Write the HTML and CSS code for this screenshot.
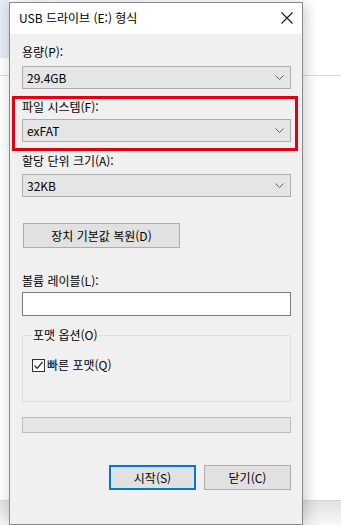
FILE: index.html
```html
<!DOCTYPE html>
<html lang="ko">
<head>
<meta charset="utf-8">
<title>USB 드라이브 (E:) 형식</title>
<link rel="stylesheet" href="styles.css">
</head>
<body>
<div class="dialog">
  <div class="titlebar">
    <span class="title">USB 드라이브 (E:) 형식</span>
    <svg class="close" width="12" height="12" viewBox="0 0 12 12"><path d="M0.5 0.5 L11.5 11.5 M11.5 0.5 L0.5 11.5" stroke="#1a1a1a" stroke-width="1.1" fill="none"/></svg>
  </div>
  <div class="content">
    <div class="label l1">용량(P):</div>
    <div class="combo c1"><span>29.4GB</span><svg class="chev" width="9" height="5" viewBox="0 0 9 5"><path d="M0.5 0.5 L4.5 4.5 L8.5 0.5" stroke="#606060" fill="none"/></svg></div>
    <div class="highlight">
      <div class="label">파일 시스템(F):</div>
      <div class="combo c2"><span>exFAT</span><svg class="chev" width="9" height="5" viewBox="0 0 9 5"><path d="M0.5 0.5 L4.5 4.5 L8.5 0.5" stroke="#606060" fill="none"/></svg></div>
    </div>
    <div class="label l3">할당 단위 크기(A):</div>
    <div class="combo c3"><span>32KB</span><svg class="chev" width="9" height="5" viewBox="0 0 9 5"><path d="M0.5 0.5 L4.5 4.5 L8.5 0.5" stroke="#606060" fill="none"/></svg></div>
    <div class="btn restore">장치 기본값 복원(D)</div>
    <div class="label l4">볼륨 레이블(L):</div>
    <div class="input"></div>
    <div class="group">
      <span class="legend">포맷 옵션(O)</span>
      <div class="check-row">
        <span class="checkbox"><svg width="11" height="11" viewBox="0 0 11 11"><path d="M1.5 5.5 L4.2 8.3 L9.5 2" stroke="#222" stroke-width="1.2" fill="none"/></svg></span>
        <span>빠른 포맷(Q)</span>
      </div>
    </div>
    <div class="progress"></div>
    <div class="actions">
      <div class="btn primary">시작(S)</div>
      <div class="btn">닫기(C)</div>
    </div>
  </div>
</div>
</body>
</html>
```
FILE: styles.css
```css
html, body {
  margin: 0;
  padding: 0;
}
body {
  width: 341px;
  height: 525px;
  overflow: hidden;
  box-sizing: border-box;
  padding: 2px 0 0 9px;
  font-family: "Noto Sans CJK KR", "Noto Sans", sans-serif;
  font-size: 12px;
  color: #000;
  background:
    linear-gradient(#e4ebf4, #e4ebf4) 0 0 / 9px 58px no-repeat,
    linear-gradient(#dadada, #dadada) 0 75px / 100% 1px no-repeat,
    linear-gradient(#d4d4d4, #d4d4d4) 0 500px / 100% 1px no-repeat,
    linear-gradient(#e2e2e2, #f7f7f7) 0 501px / 100% 24px no-repeat,
    #ffffff;
}
.dialog {
  width: 294px;
  height: 523px;
  box-sizing: border-box;
  border: 1px solid #8a8a8a;
  background: #f0f0f0;
  box-shadow: 2px 2px 14px rgba(0, 0, 0, 0.22);
  display: flex;
  flex-direction: column;
}
.titlebar {
  height: 31px;
  background: #ffffff;
  display: flex;
  align-items: center;
  justify-content: space-between;
  padding: 0 9px 0 9px;
  flex: none;
}
.title {
  font-size: 12px;
  line-height: 16px;
  color: #000;
  margin-top: -1px;
}
.close {
  margin-top: -1px;
}
.content {
  padding: 0 11px 0 12px;
  display: flex;
  flex-direction: column;
}
.label {
  height: 16px;
  line-height: 16px;
  white-space: nowrap;
}
.l1 { margin-top: 10px; }
.combo {
  height: 23px;
  box-sizing: border-box;
  border: 1px solid #adadad;
  background: #e5e5e5;
  display: flex;
  align-items: center;
  justify-content: space-between;
  padding: 0 5px 0 4px;
  line-height: 16px;
}
.c1 { margin-top: 6px; }
.chev { margin-right: 1px; }
.highlight {
  margin: 7px -7px 0 -10px;
  border: 3px solid #e3000f;
  padding: 0 4px 6px 7px;
  display: flex;
  flex-direction: column;
}
.c2 { margin-top: 4px; }
.l3 { margin-top: 2px; }
.c3 { margin-top: 5px; }
.btn {
  height: 25px;
  box-sizing: border-box;
  border: 1px solid #adadad;
  background: #e1e1e1;
  display: flex;
  align-items: center;
  justify-content: center;
  line-height: 16px;
}
.restore {
  margin-top: 26px;
  margin-left: 1px;
  width: 157px;
}
.l4 { margin-top: 25px; }
.input {
  margin-top: 3px;
  height: 24px;
  box-sizing: border-box;
  border: 1px solid #7a7a7a;
  background: #ffffff;
}
.group {
  position: relative;
  margin-top: 19px;
  height: 67px;
  box-sizing: border-box;
  border: 1px solid #dcdcdc;
  border-radius: 2px;
  padding: 21px 0 0 9px;
}
.legend {
  position: absolute;
  top: -9px;
  left: 9px;
  padding: 0 1px;
  background: #f0f0f0;
  line-height: 16px;
}
.check-row {
  display: flex;
  align-items: center;
  gap: 2px;
  line-height: 16px;
}
.checkbox {
  width: 13px;
  height: 13px;
  box-sizing: border-box;
  border: 1px solid #333;
  background: #fff;
  display: flex;
  align-items: center;
  justify-content: center;
}
.progress {
  margin-top: 15px;
  height: 16px;
  box-sizing: border-box;
  border: 1px solid #bcbcbc;
  background: #e6e6e6;
}
.actions {
  margin-top: 32px;
  display: flex;
  justify-content: flex-end;
  gap: 8px;
}
.actions .btn {
  width: 87px;
}
.btn.primary {
  border: 2px solid #0078d7;
}
```
